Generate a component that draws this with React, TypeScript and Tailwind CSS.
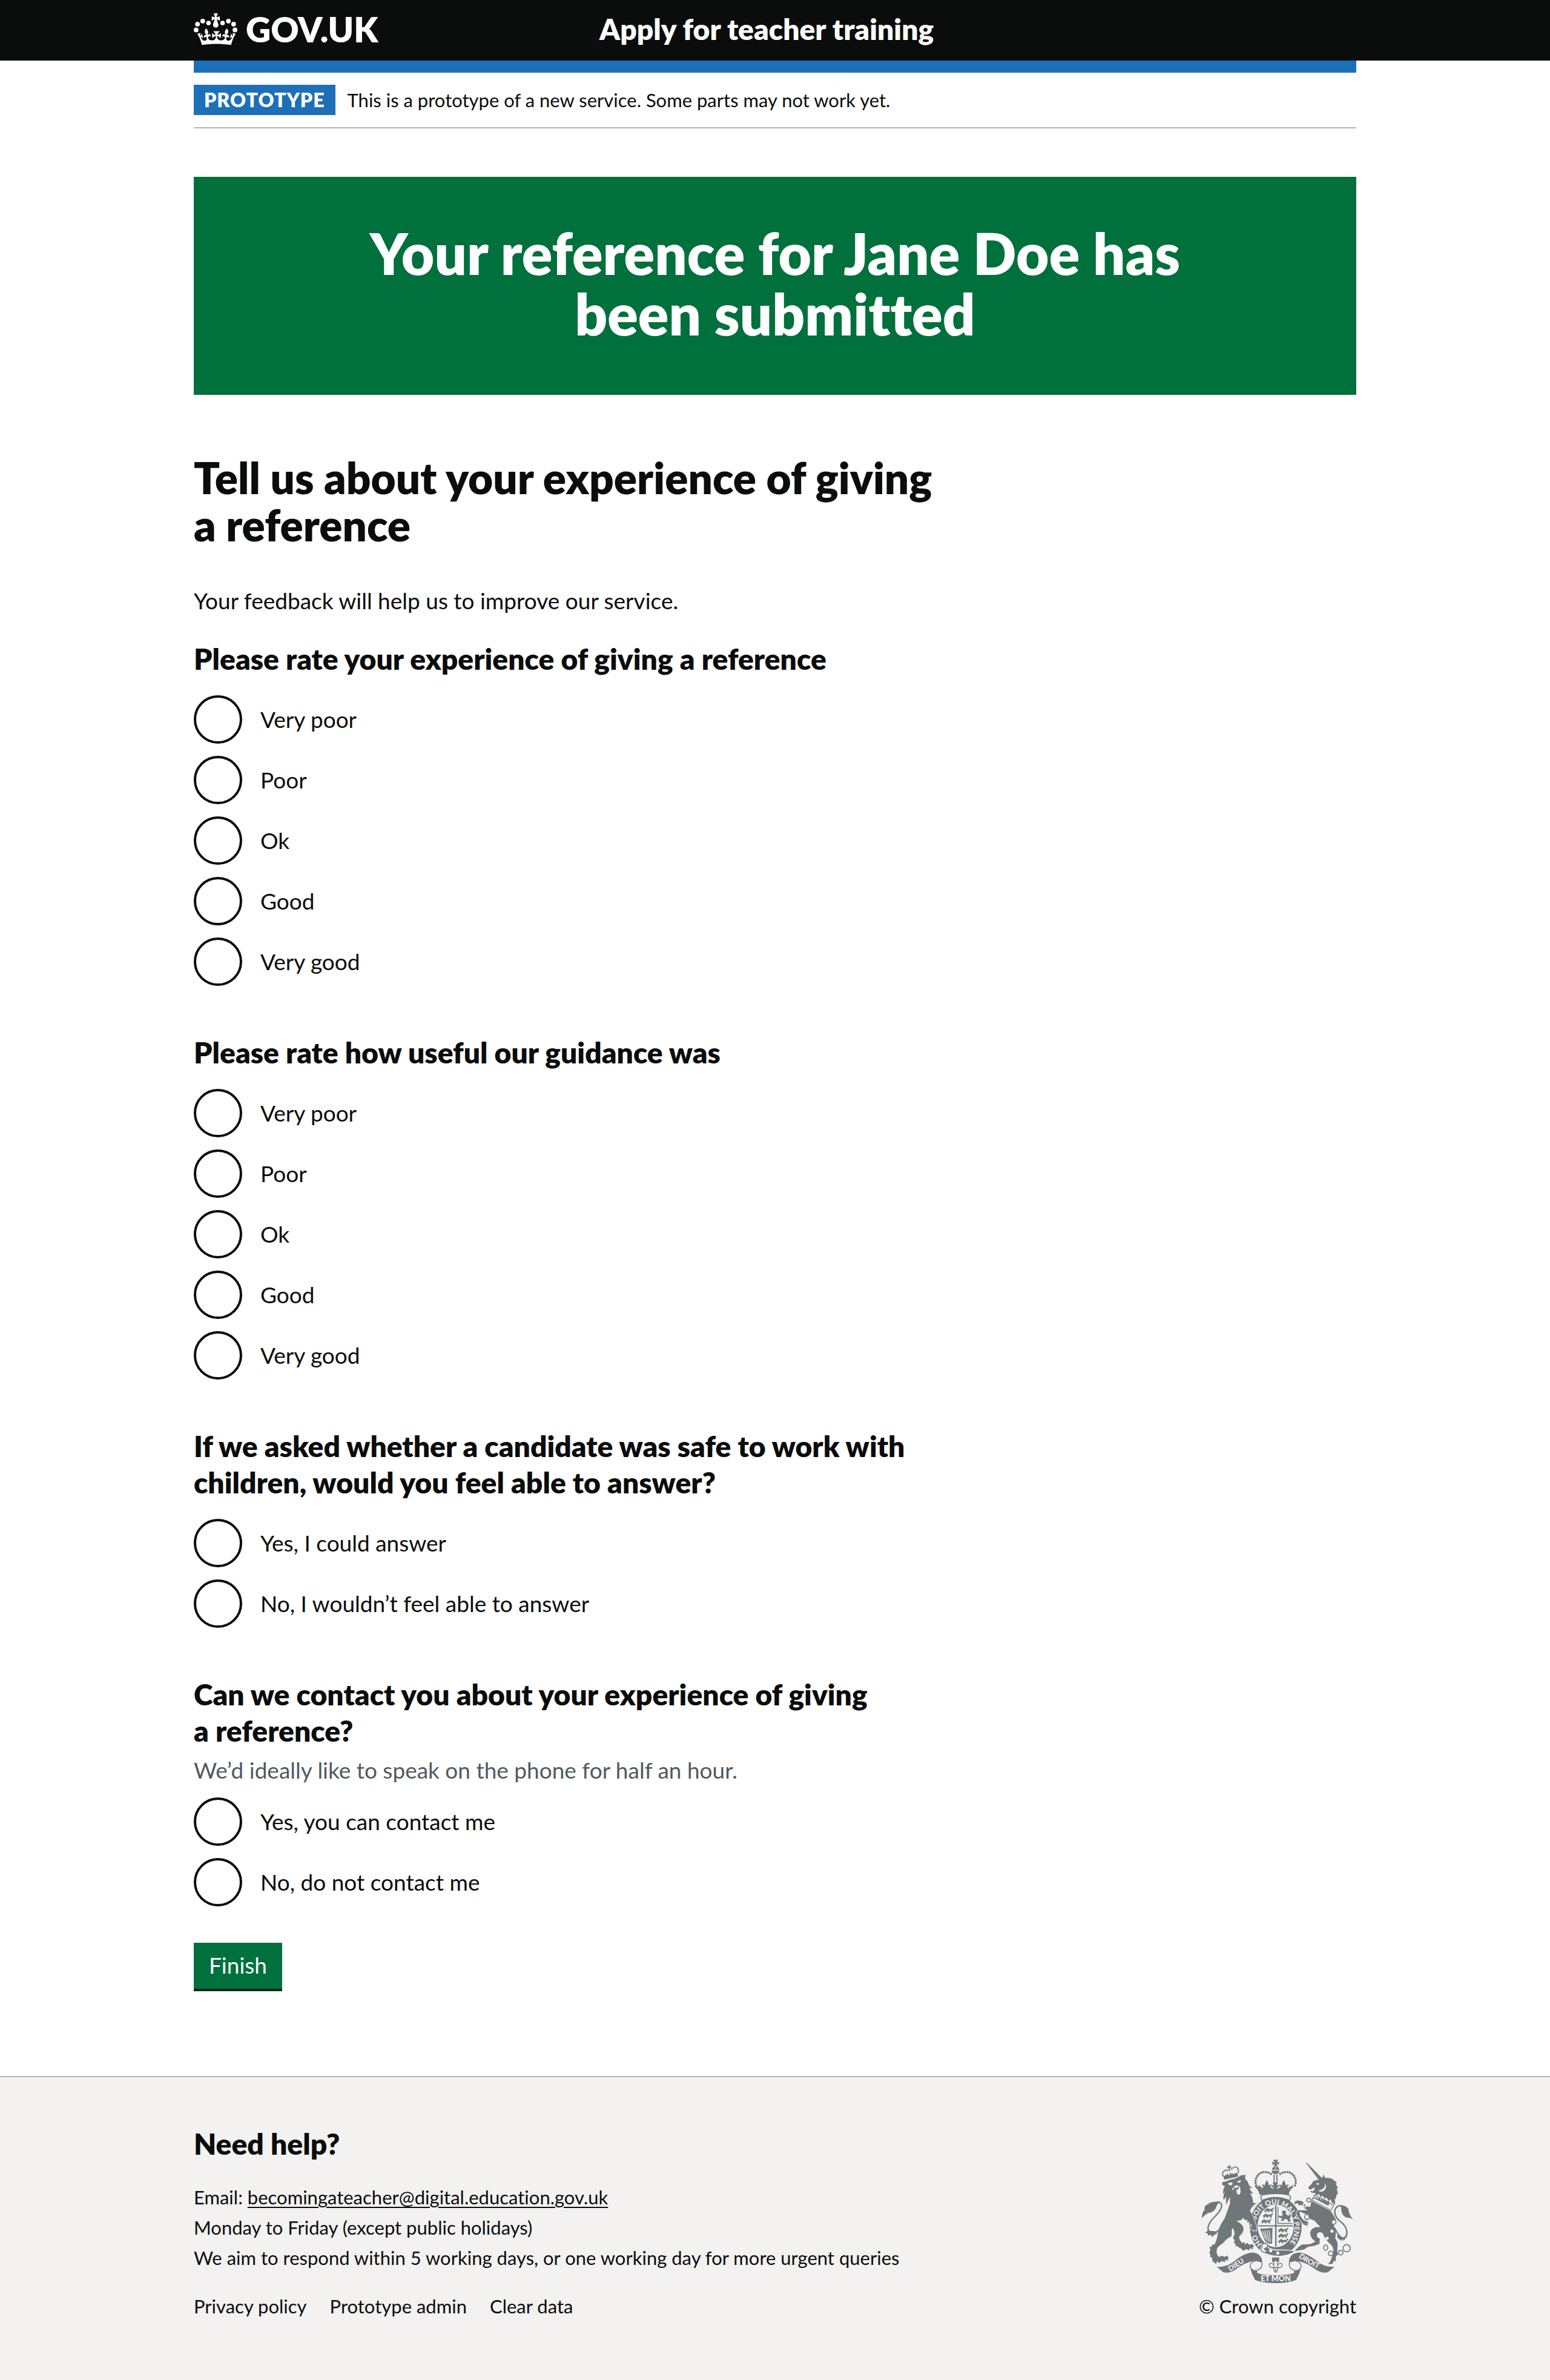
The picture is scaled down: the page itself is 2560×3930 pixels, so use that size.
import type { ReactNode } from "react";

function Container({ children, className = "" }: { children: ReactNode; className?: string }) {
  return <div className={`mx-auto w-full max-w-[1980px] px-[30px] ${className}`}>{children}</div>;
}

function Crown() {
  return (
    <svg viewBox="0 3 36 28" className="h-[56px] w-[72px] shrink-0" fill="currentColor" aria-hidden="true">
      <circle cx="7.4" cy="10.4" r="1.95" />
      <circle cx="3.1" cy="12.9" r="1.95" />
      <circle cx="1.95" cy="17.7" r="1.95" />
      <circle cx="12.2" cy="12" r="1.9" />
      <circle cx="28.6" cy="10.4" r="1.95" />
      <circle cx="32.9" cy="12.9" r="1.95" />
      <circle cx="34.05" cy="17.7" r="1.95" />
      <circle cx="23.8" cy="12" r="1.9" />
      <path d="m19.1 8.9 2.4 1.3V6.5l-2.4.8c-.1-.1-.1-.2-.2-.3s1-3 1-3h-3.4l1 3c-.1.1-.2.2-.2.3-.1.1-2.4-.8-2.4-.8v3.7L17 8.8c.1.1.2.2.3.2l-1.3 4c-.1.2-.1.4-.1.6 0 1.1.8 2 1.9 2.2h.7c1-.2 1.9-1.1 1.9-2.1 0-.2 0-.4-.1-.6l-1.3-4c-.1-.2 0-.2.1-.2m-1 20.3c4.6 0 8.9.3 12.8.9 1.1-4.6 2.4-7.2 3.8-9.1l-2.6-.9c.3 1.3.3 1.9 0 2.7-.4-.4-.8-1.1-1.1-2.3l-1.2 4c.7-.5 1.3-.8 2-.9-1.1 2.5-2.6 3.1-3.5 3-1.1-.2-1.7-1.2-1.5-2.1.3-1.2 1.5-1.5 2.1-.1 1.1-2.3-.8-3-2-2.3 1.9-1.9 2.1-3.5.6-5.6-2.1 1.6-2.1 3.2-1.2 5.5-1.2-1.4-3.2-.6-2.5 1.6.9-1.4 2.1-.5 1.9.8-.2 1.1-1.7 2.1-3.5 1.9-2.7-.2-2.9-2.1-2.9-3.6.7-.1 1.9.5 2.9 1.9l.4-4.3c-1.1 1.1-2.1 1.4-3.2 1.4.4-1.2 2.1-3 2.1-3h-5.4s1.7 1.9 2.1 3c-1.1 0-2.1-.2-3.2-1.4l.4 4.3c1-1.4 2.2-2 2.9-1.9-.1 1.5-.2 3.4-2.9 3.6-1.9.2-3.4-.8-3.5-1.9-.2-1.3 1-2.2 1.9-.8.7-2.3-1.2-3-2.5-1.6.9-2.2.9-3.9-1.2-5.5-1.5 2-1.3 3.7.6 5.6-1.2-.7-3.1 0-2 2.3.6-1.4 1.8-1.1 2.1.1.2.9-.3 1.9-1.5 2.1-.9.2-2.4-.5-3.5-3 .6 0 1.2.3 2 .9l-1.2-4c-.3 1.1-.7 1.9-1.1 2.3-.3-.8-.2-1.4 0-2.7l-2.6.9c1.4 1.9 2.7 4.5 3.8 9.1 3.8-.6 8.2-.9 12.8-.9z" />
    </svg>
  );
}

const PAPER = "#f3f2f1";

const CROWN_DOTS = [
  [401, 265], [398, 253], [398, 241], [401, 229], [407, 218], [415, 209], [426, 202], [438, 199], [451, 199], [463, 202], [475, 208],
];

const LION_CROWN_DOTS = [
  [116, 91], [114, 82], [117, 73], [123, 67], [131, 64], [139, 64], [160, 58], [168, 51], [177, 47], [186, 50], [191, 57], [193, 66], [192, 75],
];

const PASSANT =
  "M0 14q2-7 8-5l2-5 7-2 4 5 15 0q7 0 10-7l4 1q-3 9-9 10l3 9-6 1-4-7-10 0 2 7-6 0-4-7-5 1-3 6-5-1 3-7z";

function HalfRibbon() {
  return (
    <g>
      <path d="M205 669Q255 672 292 641Q346 598 384 598Q418 600 430 632L432 660Q412 636 386 641Q345 647 292 687Q264 703 238 696Z" fill="currentColor" />
      <path d="M398 640Q366 648 372 672Q378 690 405 686Q434 678 429 648" fill={PAPER} stroke="currentColor" strokeWidth="4" />
      <path d="M372 670Q376 700 392 726L408 690Q384 692 372 670Z" fill="currentColor" />
    </g>
  );
}

function CoatOfArms() {
  return (
    <svg viewBox="132 137 750 613" className="h-[204px] w-[250px] text-[#6f777b]" role="img" aria-label="Royal coat of arms">
      <defs>
        <path id="garter-top" d="M400 438A98 116 0 1 1 566 552" />
        <path id="garter-left" d="M430 556A100 118 0 0 1 399 494" />
        <path id="ribbon-left" d="M272 692Q318 664 376 622" />
        <path id="ribbon-right" d="M611 622Q660 658 740 692" />
        <path id="beast" d={PASSANT} strokeWidth="2" stroke="currentColor" />
      </defs>

      {/* Imperial crown */}
      <g fill="currentColor">
        <path d="M485 138h25l-8 14 12-5v16l-12-5 5 13h-20l6-13-12 5v-16l12 5z" />
        <path d="M479 188q2-16 17-16v16zM499 188v-16q15 0 17 16z" />
        <path d="M478 192h38q0 17-19 17t-19-17z" />
        <path d="M487 211h6v36h-6zM501 211h6v36h-6z" />
        {CROWN_DOTS.map(([x, y]) => (
          <g key={`${x}-${y}`}>
            <circle cx={x} cy={y} r="5.8" />
            <circle cx={995 - x} cy={y} r="5.8" />
          </g>
        ))}
        <path d="M404 270l26 2-3 10q8-3 10-12-7-2-8-8 8-4 16 4-1-14 9-26 10 12 9 26 8-8 15-4-2 7-8 9 4 10 16 10l2-9-10 5v-14l10 4-5-18h26l-5 18 10-4v14l-10-5 2 9q12 0 16-10-6-2-8-9 7-4 15 4-1-14 9-26 10 12 9 26 8-8 16-4-1 6-8 8 2 9 10 12l-3-10 26-2q-22 18-26 42-60-12-144 0-4-24-26-42z" />
        <path d="M415 262l10 16-14-2zM580 262l-10 16 14-2z" />
      </g>

      {/* Garter and shield */}
      <ellipse cx="498" cy="468" rx="129" ry="149" fill="currentColor" />
      <ellipse cx="498" cy="466" rx="90" ry="106" fill={PAPER} />
      <path d="M434 312Q498 300 561 312Q576 318 570 332L566 340Q498 310 430 340L426 332Q420 318 434 312Z" fill={PAPER} stroke="currentColor" strokeWidth="5" />
      <clipPath id="shield">
        <ellipse cx="498" cy="466" rx="86" ry="102" />
      </clipPath>
      <g clipPath="url(#shield)">
        <path d="M495 362h7v212h-7zM408 463h180v6H408z" fill="currentColor" />
        <g fill="currentColor">
          <use href="#beast" x="440" y="376" />
          <use href="#beast" x="434" y="404" />
          <use href="#beast" x="426" y="432" />
          <use href="#beast" x="510" y="476" />
          <use href="#beast" x="510" y="503" />
          <use href="#beast" x="510" y="530" />
          <path d="M528 395l12-6 10 6-3 10 14 12 6-10-7-10 10 3 6 14-8 14 4 14-12 6-1-10-12-8-14 12-12-2 12-10-16-4-8-12 16 4 8-6z" />
          <path d="M420 480q30 0 62-4l-2 78q-30 4-40-24-8-26-20-50z" />
        </g>
        <path d="M509 372v82h72" fill="none" stroke="currentColor" strokeWidth="4" />
        <path d="M433 490l14 40M443 489l12 50M454 488l10 58M465 487l7 58" stroke={PAPER} strokeWidth="4" />
      </g>
      <g fill={PAPER} fontFamily="Lato, sans-serif" fontWeight="900" fontSize="35">
        <text><textPath href="#garter-top">SOIT QUI MAL Y PENSE</textPath></text>
        <text><textPath href="#garter-left">HO</textPath></text>
      </g>
      <path d="M430 556Q470 584 500 586Q550 584 600 590Q560 616 515 618Q460 616 420 590Z" fill="currentColor" stroke={PAPER} strokeWidth="5" />
      <path d="M448 554Q424 552 430 572Q418 588 434 596Q452 600 454 588L440 582L456 570Q462 556 448 554Z" fill={PAPER} stroke="currentColor" strokeWidth="4" />
      <circle cx="473" cy="589" r="8" fill={PAPER} />
      <circle cx="508" cy="601" r="8" fill={PAPER} />

      {/* Lion */}
      <g transform="translate(120 126)" fill="currentColor">
        <path d="M118 92l10 0-2-8 8 5 6-12 3 10 8-1 1-13 7 10 7-6 0 8 12-8 10 2 4 16-70 16z" />
        <path d="M143 40l8-1-1 7 7-2 1 8-7-1 1 16-6 1-1-16-7 2-1-7 7-1z" />
        {LION_CROWN_DOTS.map(([x, y]) => (
          <circle key={`${x}-${y}`} cx={x} cy={y} r="4" />
        ))}
        <path d="M112 124Q130 122 150 112Q190 104 204 90L227 86L226 108Q240 116 243 134Q252 148 264 153L246 152Q254 168 267 180L250 178Q264 196 266 226Q276 228 285 226Q260 240 250 266Q262 284 268 300L280 336Q286 352 281 366L274 358L268 366L260 356L250 356L248 348L260 344L258 332L244 334L250 322L236 322L238 310L226 312L218 300L204 312L182 316Q206 326 216 344Q222 362 212 376L196 394Q196 412 214 426L222 420L226 432L238 424L246 434L262 430L272 444L262 446L266 458L250 450L248 462L232 456L216 464L206 452L196 448L188 440L178 442L180 430L170 424L174 412L166 398L174 380Q172 360 163 350Q158 360 160 374L158 392Q138 400 118 424Q98 438 88 448L84 466L88 484L96 494L112 488L124 494L136 488L148 502L140 500L142 512L128 508L126 520L110 514L98 524L86 516L82 530L72 520L64 516L62 498L52 494L54 482L48 474L54 460L48 442L58 446L64 432L74 434Q90 400 92 366Q104 330 124 304Q132 284 152 226Q148 216 154 196Q140 210 134 236Q128 214 134 196Q124 202 120 212Q114 192 126 170L116 182Q116 160 126 142L113 138Z" stroke={PAPER} strokeWidth="5" paintOrder="stroke" />
        <path d="M112 344Q92 372 62 374Q40 370 42 348Q46 322 78 292Q108 262 110 240Q108 222 88 221" fill="none" stroke="currentColor" strokeWidth="7" />
        <path d="M94 220Q58 218 42 232L26 242L24 262Q12 272 11 302Q24 286 42 276Q68 276 80 254Q84 238 94 226ZM40 364L28 374L42 378L40 388L56 384L62 396Q70 384 90 376L74 366Z" />
        <path d="M140 130q12-8 24-4l-2 10-10 4zM184 122q10-8 22-8l-2 8-10 4z" fill={PAPER} />
        <path d="M162 152l8-4 4-6 12-4 16 10 0 12q6 16-6 26-14-2-12-22l-8-4-12 2z" fill={PAPER} />
        <path d="M164 148l18 4 14-8-4 16-18 2z" />
      </g>

      {/* Unicorn */}
      <g transform="translate(585 126)" fill="currentColor">
        <path d="M62 27l5 0 78 78-16 10z" />
        <path d="M126 110L146 100L150 84L158 102Q190 100 202 114L218 126L210 130L222 152L216 154L222 184L216 182L210 208L206 202L208 236L190 222L186 208L176 216L164 198L156 206L146 190L136 198L128 182L112 188L108 176L92 176L84 168L98 164L88 160L78 158L75 148L88 136L100 118Z" />
        <path d="M112 130l14-2 4 6-12 2zM86 160l18-10 4 6-12 14zM124 164q38-4 34-38 14 28-10 42-14 6-24-4z" fill={PAPER} />
        <path d="M106 186l94 52-12 24-96-50z" fill={PAPER} stroke="currentColor" strokeWidth="4" />
        <path d="M102 210l6-18 6 12 6-8 2 14 8-14 6 16 8-10 2 14 8-12 4 16 8-10 0 14 8-10 6 12-6 14-76-40z" />
        <path d="M90 216L184 264Q206 296 212 310Q200 324 202 340Q216 372 208 402Q222 420 220 440L218 470L222 482L212 492L210 516L200 514L196 528L170 530Q184 522 190 500L198 476Q202 450 190 436Q158 410 146 376Q126 366 118 380Q112 398 132 404L130 430L100 440L74 444L52 458L8 465Q26 440 48 432Q80 436 110 418Q84 400 84 372Q92 342 136 346Q118 330 104 312Q84 314 66 284L40 272L30 270L34 290L52 312L72 320L76 330L66 328L76 340L52 334L38 316L16 282Q14 266 30 262Q52 264 72 262L58 254Q50 246 42 236L28 238L20 226L8 234L6 220L22 214L38 216Q54 220 58 236Q70 246 84 246Z" stroke={PAPER} strokeWidth="5" paintOrder="stroke" />
        <path d="M206 350Q222 390 246 402Q270 396 266 366Q262 338 226 312Q204 292 206 264Q212 240 236 240L256 246" fill="none" stroke="currentColor" strokeWidth="7" />
        <path d="M236 237Q262 240 274 256L276 270L282 286L298 312Q286 298 270 300Q246 294 240 270Q238 254 236 244ZM218 384L234 394L250 398L270 394L258 402L256 410L240 408L250 416Q228 412 218 396Z" />
        <g fill="none" stroke="currentColor" strokeWidth="5">
          <circle cx="77" cy="212" r="10" />
          <circle cx="58" cy="236" r="9" stroke={PAPER} />
          <ellipse cx="68" cy="296" rx="11" ry="13" fill={PAPER} />
          <circle cx="201" cy="321" r="11" fill={PAPER} />
          <ellipse cx="161" cy="448" rx="10" ry="13" />
          <ellipse cx="186" cy="477" rx="12" ry="11" fill={PAPER} />
          <ellipse cx="235" cy="473" rx="12" ry="11" />
          <circle cx="265" cy="451" r="18" />
        </g>
        <circle cx="192" cy="366" r="8" fill={PAPER} />
        <circle cx="168" cy="402" r="8" fill={PAPER} />
      </g>

      {/* Motto ribbon */}
      <HalfRibbon />
      <g transform="matrix(-1 0 0 1 995 0)"><HalfRibbon /></g>
      <path d="M384 684Q402 704 440 708Q498 714 555 708Q593 704 611 684Q608 716 600 734Q560 750 498 750Q435 750 395 734Q388 716 384 684Z" fill="currentColor" />
      <g fill={PAPER} fontFamily="Lato, sans-serif" fontWeight="900" fontSize="38">
        <text x="498" y="742" textAnchor="middle">ET MON</text>
        <text fontSize="36"><textPath href="#ribbon-left">DIEU</textPath></text>
        <text fontSize="36"><textPath href="#ribbon-right">DROIT</textPath></text>
      </g>
      <path d="M480 623h35v22h-35z" fill="currentColor" />
      <path d="M497 634Q512 646 506 664Q518 644 530 656Q532 674 514 672L508 676Q508 690 498 697Q488 690 488 676L482 672Q464 674 466 656Q478 644 490 664Q484 646 497 634Z" fill={PAPER} stroke="currentColor" strokeWidth="4" />
      <path d="M482 671h32M498 676v16" stroke="currentColor" strokeWidth="4" />
    </svg>
  );
}

type Question = { name: string; legend: string; hint?: string; options: string[] };

const RATINGS = ["Very poor", "Poor", "Ok", "Good", "Very good"];

const QUESTIONS: Question[] = [
  { name: "experience", legend: "Please rate your experience of giving a\u00a0reference", options: RATINGS },
  { name: "guidance", legend: "Please rate how useful our guidance was", options: RATINGS },
  {
    name: "safe",
    legend: "If we asked whether a candidate was safe to work with children, would you feel able to answer?",
    options: ["Yes, I could answer", "No, I wouldn’t feel able to answer"],
  },
  {
    name: "contact",
    legend: "Can we contact you about your experience of giving a\u00a0reference?",
    hint: "We’d ideally like to speak on the phone for half an hour.",
    options: ["Yes, you can contact me", "No, do not contact me"],
  },
];

function RadioQuestion({ name, legend, hint, options }: Question) {
  const hintId = hint ? `${name}-hint` : undefined;
  return (
    <fieldset aria-describedby={hintId}>
      <legend className={`text-[48px] leading-[60px] font-extrabold ${hint ? "mb-[10px]" : "mb-[30px]"}`}>{legend}</legend>
      {hint && <p id={hintId} className="mb-5 text-[37px] leading-[50px] text-[#505a5f]">{hint}</p>}
      <div className="flex flex-col gap-5">
        {options.map((option, i) => (
          <div key={option} className="flex items-center gap-[30px]">
            <input
              type="radio"
              id={`${name}-${i}`}
              name={name}
              value={option}
              className="size-20 shrink-0 appearance-none rounded-full border-4 border-[#0b0c0c] bg-white checked:bg-[#0b0c0c] checked:bg-clip-content checked:p-4"
            />
            <label htmlFor={`${name}-${i}`} className="text-[37px] leading-[50px]">{option}</label>
          </div>
        ))}
      </div>
    </fieldset>
  );
}

export default function App() {
  return (
    <div className="min-h-screen bg-white font-['Lato',sans-serif] text-[#0b0c0c] [font-variant-ligatures:none]">
      <header className="bg-[#0b0c0c] text-white">
        <Container className="flex h-[100px] items-center pb-1">
          <div className="w-[670px]">
            <a href="#" className="flex w-fit items-center gap-[14px] text-[57px] leading-[70px] font-extrabold">
              <Crown />
              <span>GOV.UK</span>
            </a>
          </div>
          <a href="#" className="text-[48px] leading-[60px] font-extrabold">Apply for teacher training</a>
        </Container>
      </header>

      <Container>
        <div className="h-5 bg-[#1d70b8]" />
        <div className="flex items-center border-b-2 border-[#b1b4b6] py-5">
          <strong className="mr-5 bg-[#1d70b8] px-[17px] text-[32px] leading-[50px] font-extrabold tracking-[1px] text-white uppercase">Prototype</strong>
          <span className="text-[31px] leading-[50px]">This is a prototype of a new service. Some parts may not work yet.</span>
        </div>

        <main className="pt-20 pb-36">
          <div className="bg-[#00703c] px-20 pt-[76px] pb-[84px] text-center text-white">
            <h1 className="mx-auto max-w-[1500px] text-[94px] leading-[100px] font-extrabold">Your reference for Jane Doe has been submitted</h1>
          </div>

          <form className="mt-[98px] max-w-[1260px]" onSubmit={(e) => e.preventDefault()}>
            <h2 className="mb-[61px] text-[71px] leading-[78px] font-extrabold">Tell us about your experience of giving a&nbsp;reference</h2>
            <p className="mb-[41px] text-[37px] leading-[50px]">Your feedback will help us to improve our service.</p>
            <div className="mb-[60px] flex flex-col gap-20">
              {QUESTIONS.map((q) => <RadioQuestion key={q.name} {...q} />)}
            </div>
            <button type="submit" className="block bg-[#00703c] px-[25px] pt-3 pb-[14px] text-[37px] leading-[50px] text-white shadow-[0_4px_0_#002d18]">Finish</button>
          </form>
        </main>
      </Container>

      <footer className="border-t-2 border-[#b1b4b6] bg-[#f3f2f1] text-[31px] leading-[50px]">
        <Container className="flex items-end justify-between pt-20 pb-[97px]">
          <div>
            <h2 className="mb-[33px] text-[48px] leading-[60px] font-extrabold">Need help?</h2>
            <ul className="mb-[30px]">
              <li>Email: <a href="mailto:becomingateacher@digital.education.gov.uk" className="underline decoration-2 underline-offset-4">becomingateacher@digital.education.gov.uk</a></li>
              <li>Monday to Friday (except public holidays)</li>
              <li>We aim to respond within 5 working days, or one working day for more urgent queries</li>
            </ul>
            <ul className="flex gap-[38px]">
              {["Privacy policy", "Prototype admin", "Clear data"].map((l) => (
                <li key={l}><a href="#">{l}</a></li>
              ))}
            </ul>
          </div>
          <a href="#" className="flex flex-col items-center gap-[13px]">
            <CoatOfArms />
            <span>© Crown copyright</span>
          </a>
        </Container>
      </footer>
    </div>
  );
}
